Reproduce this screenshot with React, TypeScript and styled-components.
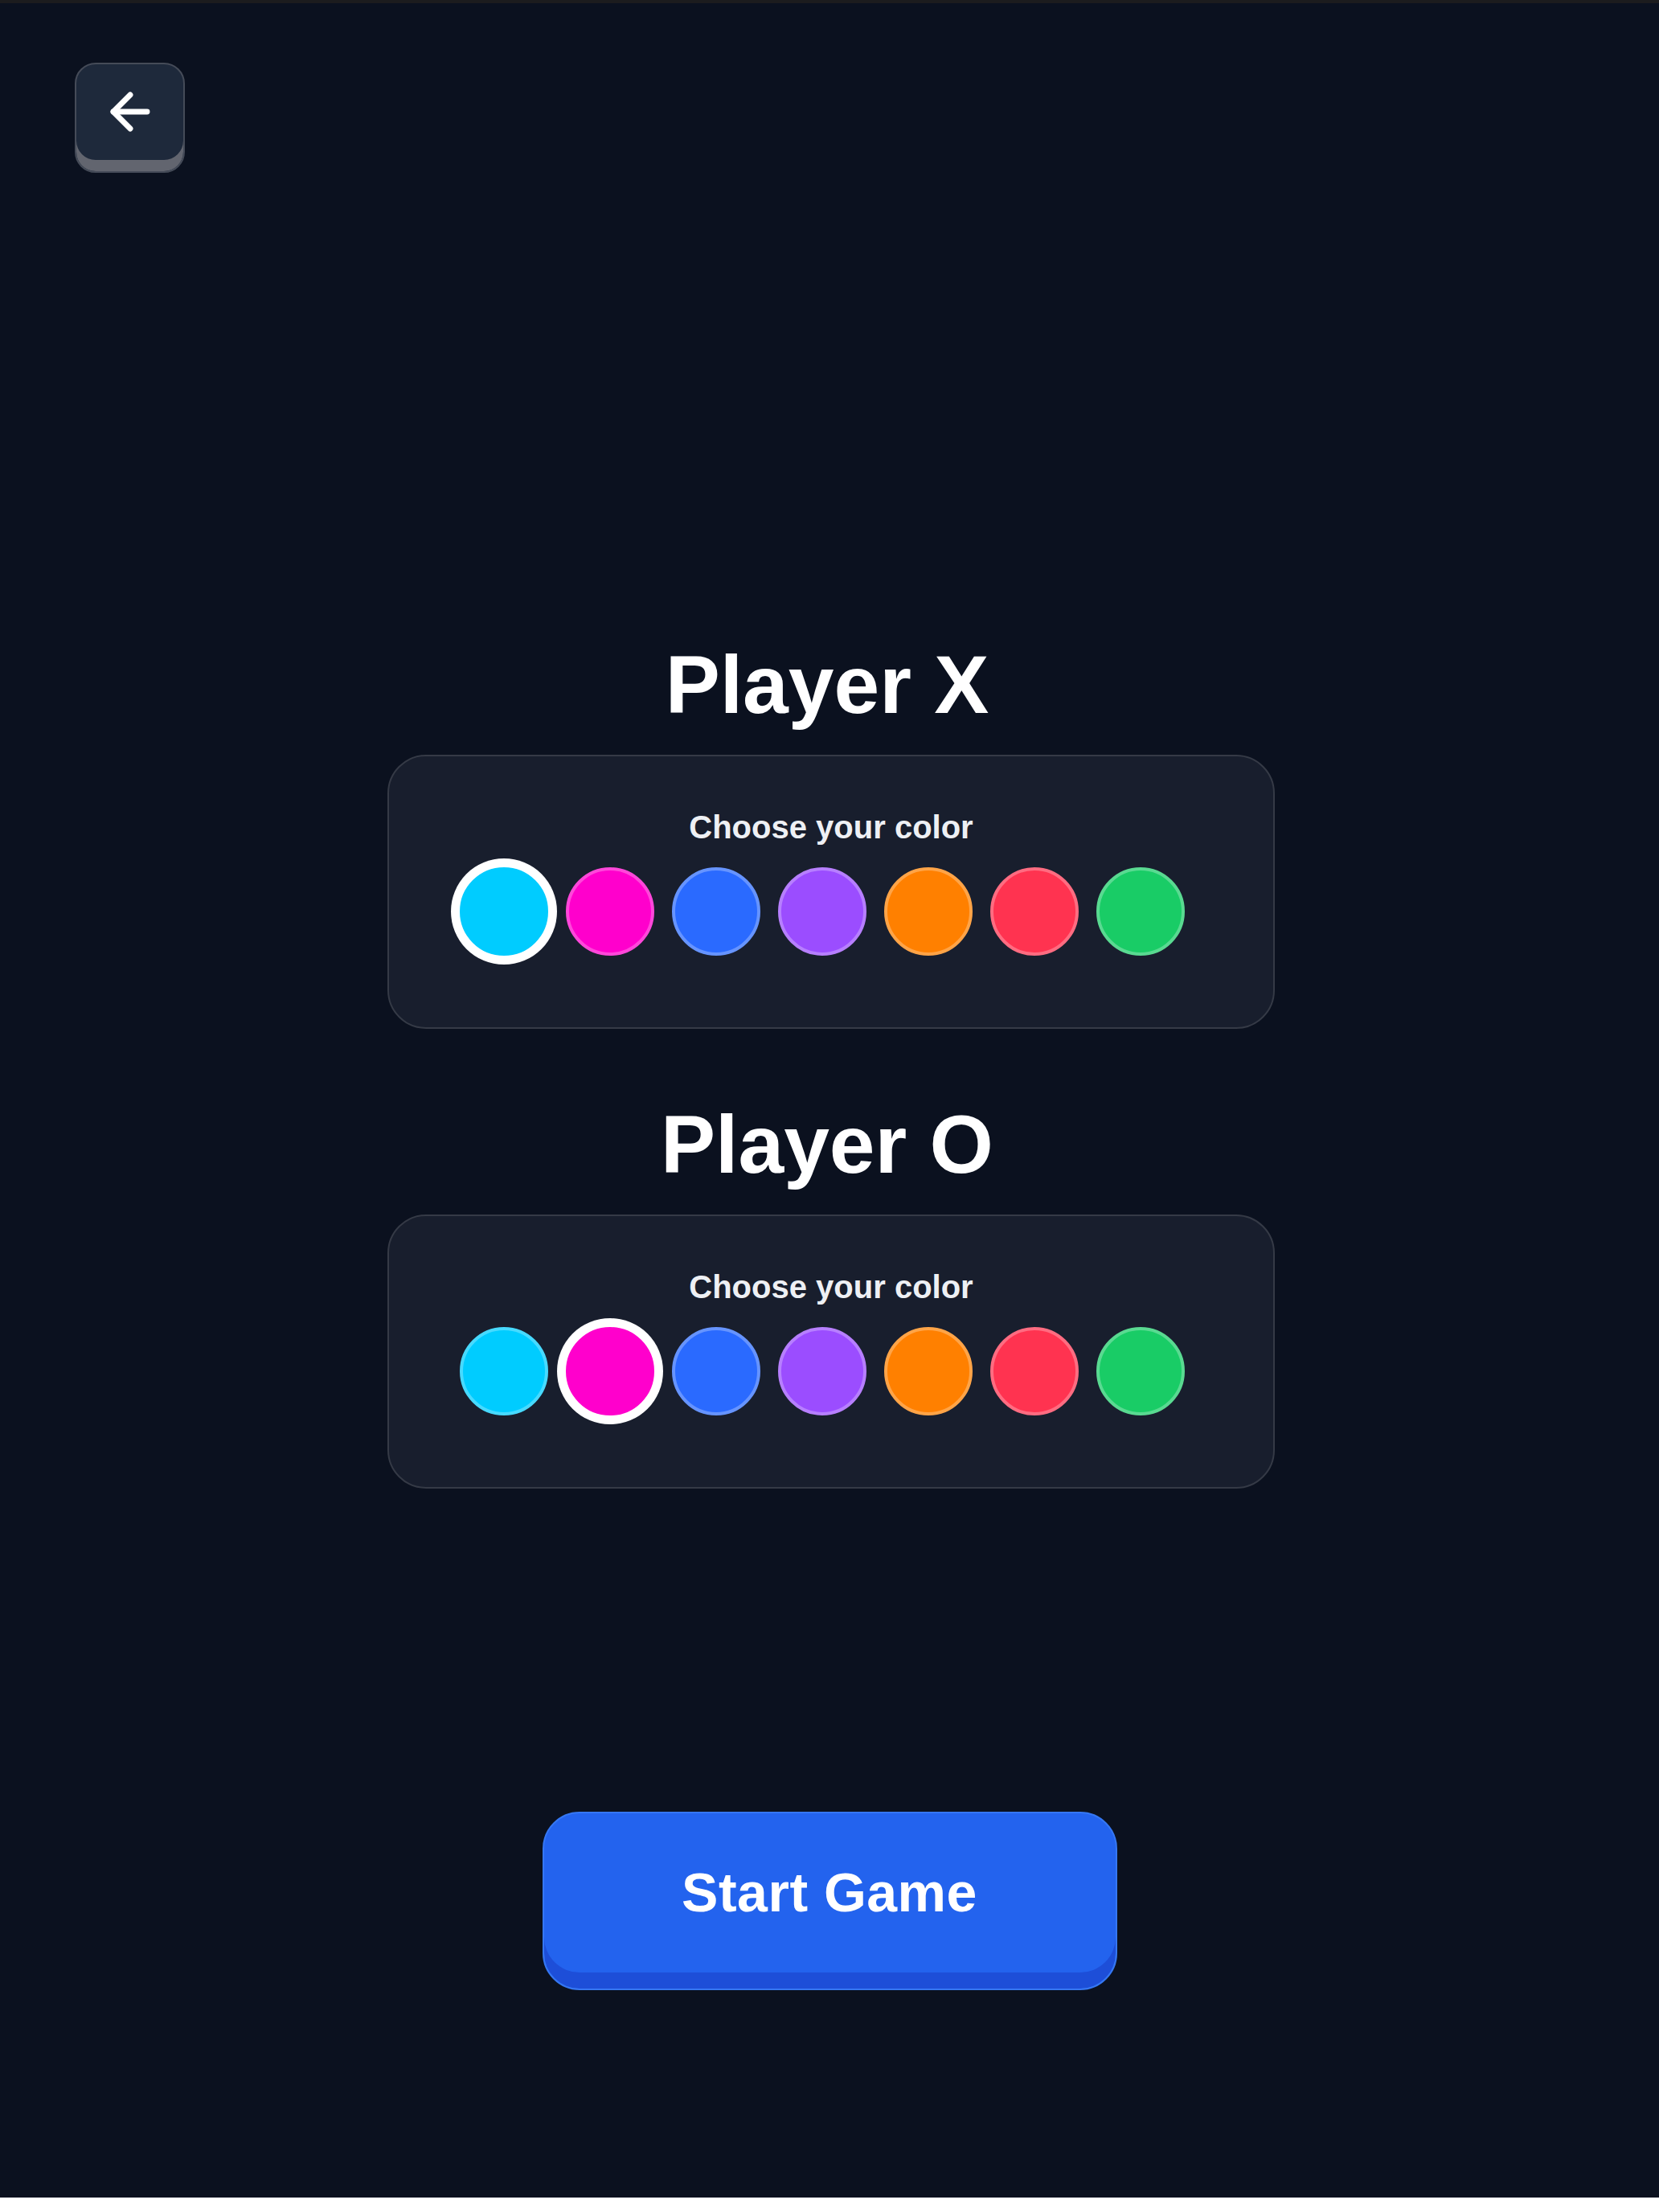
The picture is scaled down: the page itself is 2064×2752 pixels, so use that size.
import React, { useState } from "react";
import styled, { createGlobalStyle } from "styled-components";
import { ArrowLeft } from "lucide-react";

const palette = ["#00ccff", "#ff00cc", "#2a6aff", "#9b4dff", "#ff8000", "#ff3350", "#19cc66"];

const GlobalStyle = createGlobalStyle`
	html, body {
		margin: 0;
		padding: 0;
		background: #ffffff;
	}
	* {
		box-sizing: border-box;
	}
`;

interface ColorPickerProps {
	title: string;
	selected: number;
	onSelect: (index: number) => void;
}

const ColorPicker: React.FC<ColorPickerProps> = ({ title, selected, onSelect }) => {
	return (
		<Section>
			<Title>{title}</Title>
			<Card>
				<Label>Choose your color</Label>
				<Swatches>
					{palette.map((color, index) => (
						<Swatch
							key={color}
							$color={color}
							$active={index === selected}
							onClick={() => { onSelect(index); }}
							aria-label={`color ${index + 1}`}
						/>
					))}
				</Swatches>
			</Card>
		</Section>
	);
};

export default function App() {
	const [xColor, setXColor] = useState(0);
	const [oColor, setOColor] = useState(1);

	return (
		<>
			<GlobalStyle />
			<Page>
				<TopBar>
					<BackButton aria-label="Back">
						<ArrowLeft size={72} strokeWidth={2.3} color="#ffffff" />
					</BackButton>
				</TopBar>
				<Content>
					<ColorPicker title="Player X" selected={xColor} onSelect={setXColor} />
					<ColorPicker title="Player O" selected={oColor} onSelect={setOColor} />
					<StartButton>Start Game</StartButton>
				</Content>
			</Page>
		</>
	);
}

const Page = styled.div`
	height: 2734px;
	background: #0b111f;
	border-top: 4px solid #1c1c1e;
	font-family: "Liberation Sans", Arial, sans-serif;
	color: #ffffff;
	display: flex;
	flex-direction: column;
`;

const TopBar = styled.div`
	display: flex;
	padding: 74px 0 0 93px;
`;

const BackButton = styled.button`
	width: 137px;
	height: 137px;
	padding: 0 0 15px 0;
	border: 2px solid #454b58;
	border-radius: 26px;
	background: #1e293b;
	box-shadow: inset 0 -14px 0 #62656f;
	display: flex;
	align-items: center;
	justify-content: center;
	cursor: pointer;
`;

const Content = styled.div`
	display: flex;
	flex-direction: column;
	align-items: center;
	padding-top: 586px;
`;

const Section = styled.div`
	display: flex;
	flex-direction: column;
	align-items: center;
	margin-bottom: 93px;
	padding-left: 4px;

	&:nth-of-type(2) {
		margin-bottom: 402px;
	}
`;

const Title = styled.h2`
	margin: 0 10px 36px 0;
	font-size: 102px;
	line-height: 102px;
	font-weight: 700;
	color: #ffffff;
`;

const Card = styled.div`
	width: 1104px;
	height: 341px;
	padding-top: 64px;
	background: #181e2d;
	border: 2px solid #353a46;
	border-radius: 48px;
	display: flex;
	flex-direction: column;
	align-items: center;
`;

const Label = styled.div`
	font-size: 40px;
	line-height: 48px;
	font-weight: 700;
	color: #eef0f4;
	margin-bottom: 26px;
`;

const Swatches = styled.div`
	display: flex;
	gap: 22px;
	padding-right: 22px;
`;

const Swatch = styled.button<{ $color: string; $active: boolean }>`
	width: 110px;
	height: 110px;
	padding: 0;
	border-radius: 50%;
	cursor: pointer;
	background: ${({ $color }) => $color};
	border: 4px solid ${({ $color, $active }) => ($active ? $color : `color-mix(in srgb, ${$color} 72%, #ffffff)`)};
	box-shadow: ${({ $active }) => ($active ? "0 0 0 11px #ffffff" : "none")};
`;

const StartButton = styled.button`
	width: 715px;
	height: 222px;
	padding: 0 0 22px 0;
	border: 2px solid #3577f3;
	border-radius: 46px;
	background: #2363ee;
	box-shadow: inset 0 -20px 0 #1d4ed8;
	color: #ffffff;
	font-family: "Liberation Sans", Arial, sans-serif;
	font-size: 68px;
	font-weight: 700;
	letter-spacing: 0.5px;
	cursor: pointer;
`;
